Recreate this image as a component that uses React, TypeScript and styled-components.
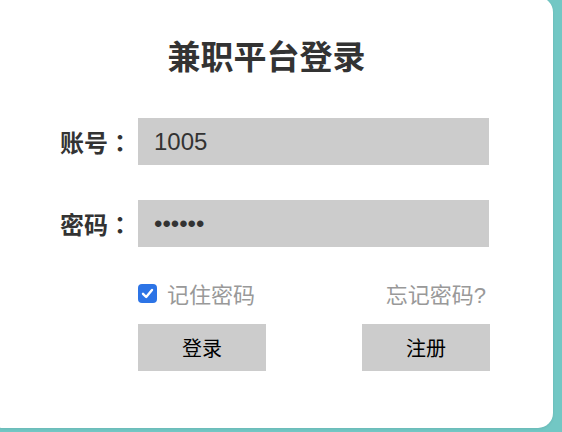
import React, { useEffect, useRef } from 'react';
import { styled, createGlobalStyle } from 'styled-components';

const GlobalStyle = createGlobalStyle`
    html, body {
        margin: 0;
        padding: 0;
        width: 562px;
        height: 432px;
        overflow: hidden;
        background: #72c7c4;
        font-family: "Liberation Sans", "Noto Sans CJK SC", sans-serif;
    }
`;

export default function App() {
    const pwdRef = useRef<HTMLInputElement>(null);

    useEffect(() => {
        const el = pwdRef.current;
        if (el) {
            el.focus();
            el.setSelectionRange(el.value.length, el.value.length);
        }
    }, []);

    return <>
        <GlobalStyle />
        <Card>
            <Title>兼职平台登录</Title>
            <FormRow>
                <Label>账号<Colon>：</Colon></Label>
                <TextInput type="text" defaultValue="1005" />
            </FormRow>
            <FormRow $gap>
                <Label>密码<Colon>：</Colon></Label>
                <TextInput ref={pwdRef} type="password" defaultValue="123456" />
            </FormRow>
            <OptionsRow>
                <Remember>
                    <CheckBox>
                        <svg width="13" height="13" viewBox="0 0 13 13">
                            <path d="M2 6.8 L5.2 10 L11 3" fill="none" stroke="#fff" strokeWidth="2.4" strokeLinecap="round" strokeLinejoin="round" />
                        </svg>
                    </CheckBox>
                    记住密码
                </Remember>
                <Forgot>忘记密码?</Forgot>
            </OptionsRow>
            <ButtonRow>
                <Button>登录</Button>
                <Button>注册</Button>
            </ButtonRow>
        </Card>
    </>;
}

const Card = styled.div`
    box-sizing: border-box;
    width: 565px;
    height: 431px;
    margin: -3px 0 0 -12px;
    padding: 41px 64px 0 72px;
    background: #fff;
    border-radius: 15px;
    box-shadow: 0 1px 3px rgba(0, 0, 0, 0.08);
`;

const Title = styled.h1`
    margin: 0 0 40px;
    padding-right: 16px;
    height: 40px;
    line-height: 40px;
    text-align: center;
    font-size: 33px;
    font-weight: 700;
    color: #333;
`;

const FormRow = styled.div<{ $gap?: boolean }>`
    display: flex;
    align-items: center;
    height: 47px;
    margin-top: ${p => (p.$gap ? '35px' : '0')};
`;

const Label = styled.label`
    width: 78px;
    flex-shrink: 0;
    font-size: 24px;
    font-weight: 700;
    color: #333;
    white-space: nowrap;
`;

const Colon = styled.span`
    font-family: "Noto Sans CJK TC", sans-serif;
`;

const TextInput = styled.input`
    box-sizing: border-box;
    width: 351px;
    height: 47px;
    padding: 0 16px;
    border: none;
    outline: none;
    background: #ccc;
    font-family: "Liberation Sans", Arial, sans-serif;
    font-size: 24px;
    color: #333;
    caret-color: #000;
`;

const OptionsRow = styled.div`
    display: flex;
    align-items: center;
    justify-content: space-between;
    width: 351px;
    height: 24px;
    margin: 34px 0 0 78px;
    font-size: 22px;
    color: #999;
`;

const Remember = styled.label`
    display: flex;
    align-items: center;
    gap: 10px;
`;

const CheckBox = styled.span`
    display: flex;
    align-items: center;
    justify-content: center;
    width: 19px;
    height: 19px;
    border-radius: 4px;
    background: #2c74e6;
`;

const Forgot = styled.span`
    padding-right: 3px;
`;

const ButtonRow = styled.div`
    display: flex;
    justify-content: space-between;
    width: 352px;
    margin: 19px 0 0 78px;
`;

const Button = styled.button`
    width: 128px;
    height: 47px;
    border: none;
    background: #ccc;
    font-family: "Liberation Sans", "Noto Sans CJK SC", sans-serif;
    font-size: 20px;
    color: #000;
    cursor: pointer;
`;
